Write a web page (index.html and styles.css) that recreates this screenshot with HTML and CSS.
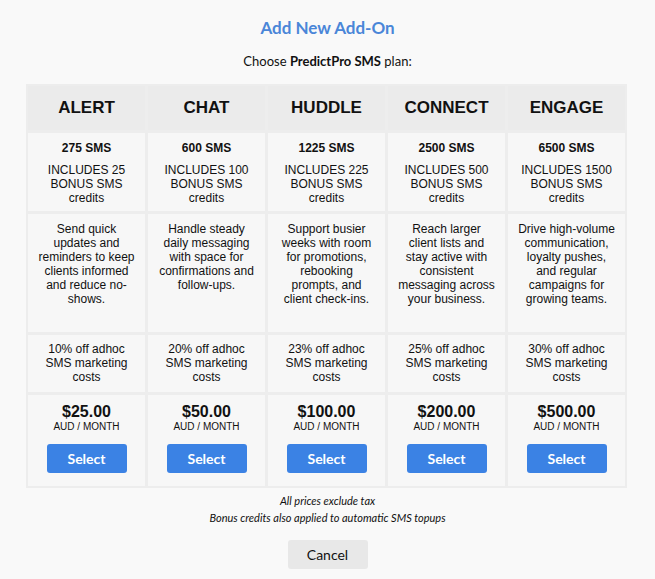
FILE: index.html
```html
<!DOCTYPE html>
<html>
<head>
<meta charset="utf-8">
<link rel="stylesheet" href="styles.css">
</head>
<body>
<div class="modal">
  <h1 class="title">Add New Add-On</h1>
  <p class="subtitle">Choose <b>PredictPro SMS</b> plan:</p>
  <div class="plans">
    <div class="cell head">ALERT</div>
    <div class="cell head">CHAT</div>
    <div class="cell head">HUDDLE</div>
    <div class="cell head">CONNECT</div>
    <div class="cell head">ENGAGE</div>

    <div class="cell qty"><div class="sms">275 SMS</div><div class="bonus">INCLUDES 25 BONUS SMS credits</div></div>
    <div class="cell qty"><div class="sms">600 SMS</div><div class="bonus">INCLUDES 100 BONUS SMS credits</div></div>
    <div class="cell qty"><div class="sms">1225 SMS</div><div class="bonus">INCLUDES 225 BONUS SMS credits</div></div>
    <div class="cell qty"><div class="sms">2500 SMS</div><div class="bonus">INCLUDES 500 BONUS SMS credits</div></div>
    <div class="cell qty"><div class="sms">6500 SMS</div><div class="bonus">INCLUDES 1500 BONUS SMS credits</div></div>

    <div class="cell desc">Send quick updates and reminders to keep clients informed and reduce no-shows.</div>
    <div class="cell desc">Handle steady daily messaging with space for confirmations and follow-ups.</div>
    <div class="cell desc">Support busier weeks with room for promotions, rebooking prompts, and client check-ins.</div>
    <div class="cell desc">Reach larger client lists and stay active with consistent messaging across your business.</div>
    <div class="cell desc">Drive high-volume communication, loyalty pushes, and regular campaigns for growing teams.</div>

    <div class="cell disc">10% off adhoc SMS marketing costs</div>
    <div class="cell disc">20% off adhoc SMS marketing costs</div>
    <div class="cell disc">23% off adhoc SMS marketing costs</div>
    <div class="cell disc">25% off adhoc SMS marketing costs</div>
    <div class="cell disc">30% off adhoc SMS marketing costs</div>

    <div class="cell price"><div class="amount">$25.00</div><div class="per">AUD / MONTH</div><button class="select">Select</button></div>
    <div class="cell price"><div class="amount">$50.00</div><div class="per">AUD / MONTH</div><button class="select">Select</button></div>
    <div class="cell price"><div class="amount">$100.00</div><div class="per">AUD / MONTH</div><button class="select">Select</button></div>
    <div class="cell price"><div class="amount">$200.00</div><div class="per">AUD / MONTH</div><button class="select">Select</button></div>
    <div class="cell price"><div class="amount">$500.00</div><div class="per">AUD / MONTH</div><button class="select">Select</button></div>
  </div>
  <div class="notes">
    <div>All prices exclude tax</div>
    <div>Bonus credits also applied to automatic SMS topups</div>
  </div>
  <div class="actions"><button class="cancel">Cancel</button></div>
</div>
</body>
</html>
```

FILE: styles.css
```css
html, body {
  margin: 0;
  background: #f9f9f9;
}
body {
  font-family: Lato, "Liberation Sans", sans-serif;
  color: #111;
}
.modal {
  padding: 18px 26px 0;
  text-align: center;
}
.title {
  margin: 0;
  font-size: 17px;
  line-height: 20px;
  font-weight: 700;
  color: #4a86d8;
}
.subtitle {
  margin: 15px 0 0;
  font-size: 13px;
  line-height: 16px;
  color: #111;
}
.subtitle b { font-weight: 700; }
.plans {
  margin-top: 15px;
  width: 601px;
  box-sizing: border-box;
  display: grid;
  grid-template-columns: repeat(5, 117px);
  grid-template-rows: 44px 78px 118px 57px 91px;
  gap: 3px;
  padding: 2px;
  background: #ededed;
  font-family: "Liberation Sans", Arial, sans-serif;
  color: #111;
}
.cell {
  background: #f7f7f7;
  box-sizing: border-box;
  padding: 0 9px;
  font-size: 12px;
  line-height: 14px;
}
.head {
  background: #ebebeb;
  font-size: 17px;
  font-weight: 700;
  display: flex;
  align-items: center;
  justify-content: center;
  color: #111;
}
.qty { padding-top: 8px; }
.sms { font-weight: 700; }
.bonus { margin-top: 8px; }
.desc { padding-top: 8px; }
.disc { padding-top: 7px; }
.price { padding-top: 7px; }
.amount {
  font-size: 16px;
  line-height: 19px;
  font-weight: 700;
}
.per {
  font-size: 10px;
  line-height: 12px;
}
.select {
  margin-top: 11px;
  width: 80px;
  height: 29px;
  border: 0;
  border-radius: 3px;
  background: #3b82e4;
  color: #fff;
  font-family: Lato, "Liberation Sans", sans-serif;
  font-weight: 700;
  font-size: 14px;
  padding: 0;
}
.notes {
  margin-top: 4px;
  font-style: italic;
  font-size: 11px;
  line-height: 17px;
  color: #111;
}
.actions { margin-top: 14px; }
.cancel {
  width: 80px;
  height: 29px;
  border: 0;
  border-radius: 3px;
  background: #e8e8e8;
  color: #111;
  font-family: Lato, "Liberation Sans", sans-serif;
  font-size: 14px;
  padding: 0;
}
```
